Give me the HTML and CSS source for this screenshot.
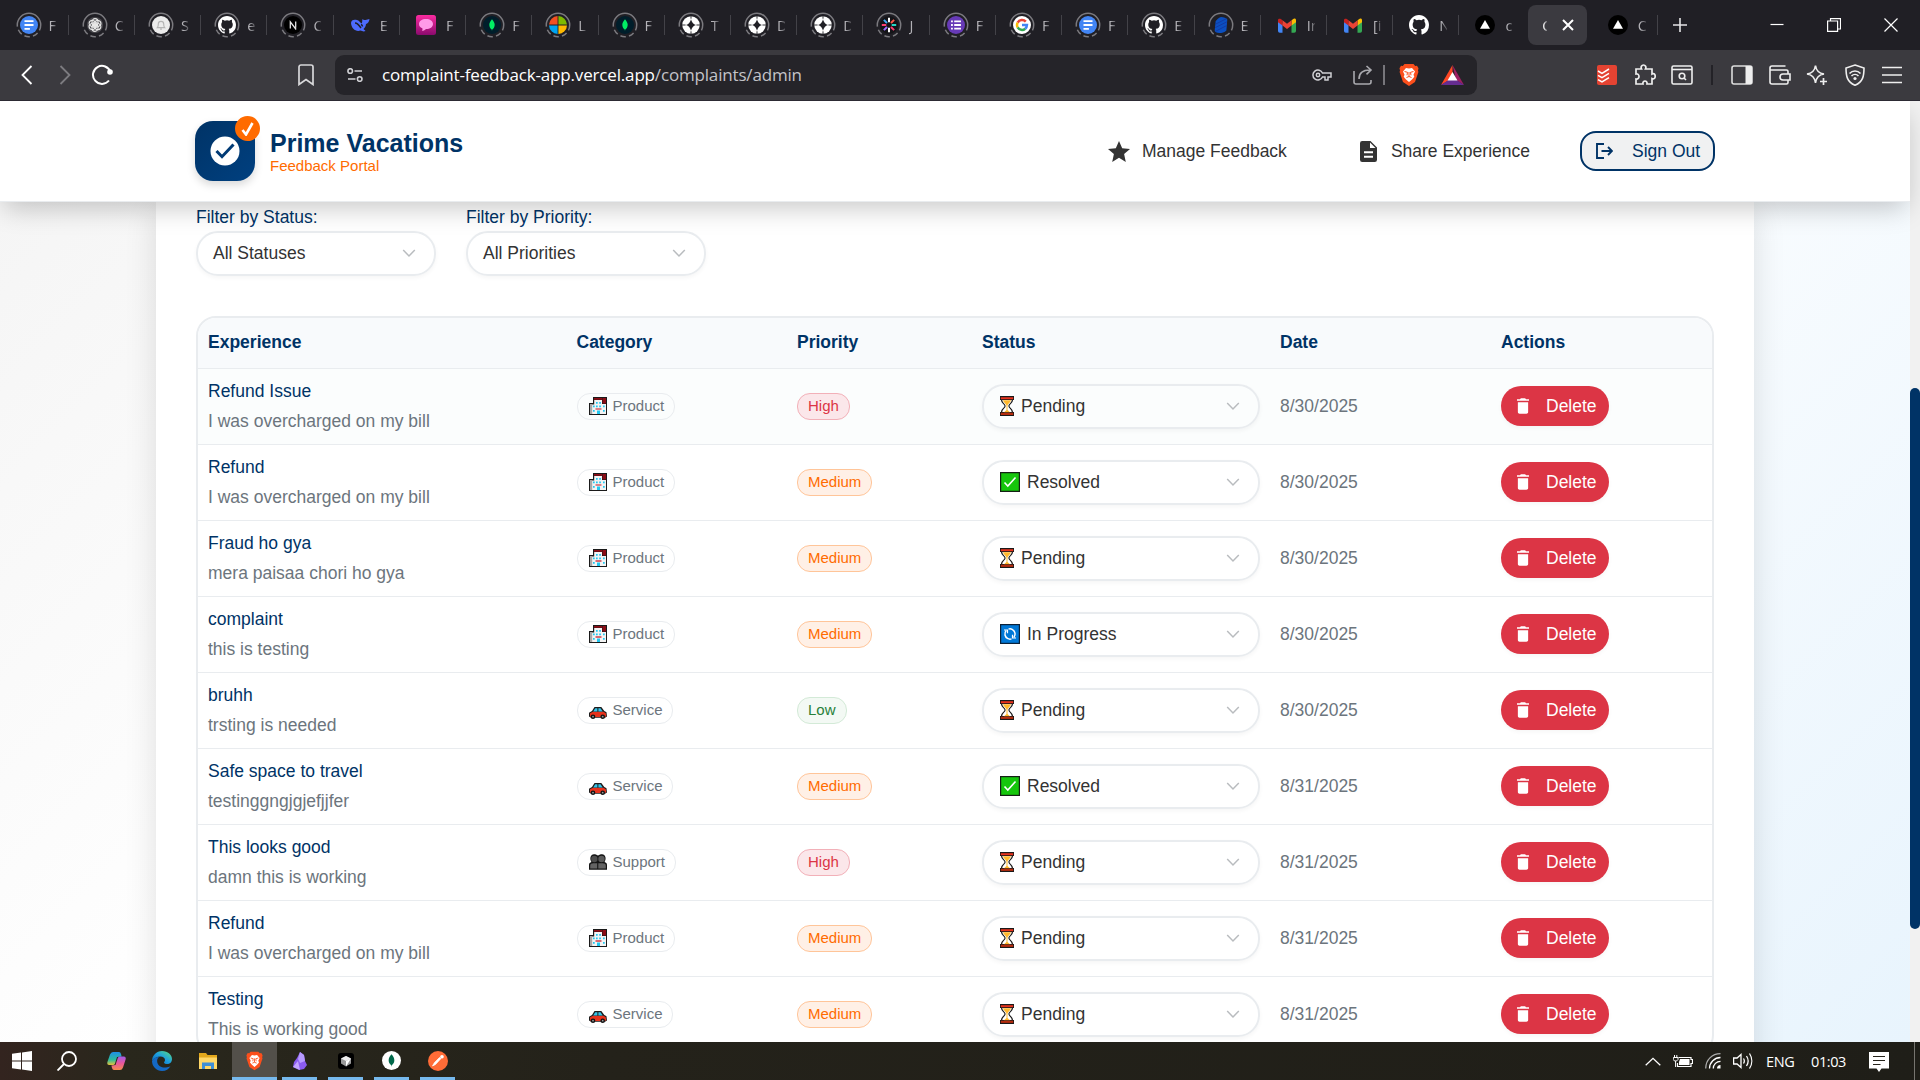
FILE: index.html
```html
<!DOCTYPE html>
<html lang="en">
<head>
<meta charset="utf-8">
<title>Complaints</title>
<link rel="stylesheet" href="styles.css">
</head>
<body>
<svg class="defs" width="0" height="0">
<defs>
<linearGradient id="g-edge" x1="0" y1="1" x2="1" y2="0"><stop offset="0" stop-color="#0c59a4"/><stop offset=".5" stop-color="#1b9de2"/><stop offset="1" stop-color="#5be07a"/></linearGradient>
<linearGradient id="g-cop1" x1="0" y1="0" x2="0" y2="1"><stop offset="0" stop-color="#1f8fe8"/><stop offset=".6" stop-color="#2dbd9b"/><stop offset="1" stop-color="#e8c13a"/></linearGradient>
<linearGradient id="g-cop2" x1="0" y1="0" x2="0" y2="1"><stop offset="0" stop-color="#a05ce8"/><stop offset=".5" stop-color="#e8569b"/><stop offset="1" stop-color="#f58a4e"/></linearGradient>
<linearGradient id="g-pink" x1="0" y1="0" x2="0" y2="1"><stop offset="0" stop-color="#fb2ba0"/><stop offset="1" stop-color="#8a0a6d"/></linearGradient>
<symbol id="ring" viewBox="0 0 26 26"><circle cx="13" cy="13" r="11.7" fill="none" stroke="#7b7a7f" stroke-width="1.5" stroke-dasharray="5.5 3.2 5.5 3.2 5.5 3.2 5.5 3.2 38.7 0"/></symbol>
<symbol id="i-docs" viewBox="0 0 20 20"><circle cx="10" cy="10" r="10" fill="#4285f4"/><path d="M5 5.8h10M5 10h10M5 14.2h6" stroke="#fff" stroke-width="2"/></symbol>
<symbol id="i-gpt" viewBox="0 0 20 20"><circle cx="10" cy="10" r="9" fill="#4a494e"/><g fill="none" stroke="#e8e8e8" stroke-width="1.3"><ellipse cx="10" cy="7" rx="3.4" ry="4"/><ellipse cx="10" cy="7" rx="3.4" ry="4" transform="rotate(60 10 10)"/><ellipse cx="10" cy="7" rx="3.4" ry="4" transform="rotate(120 10 10)"/><ellipse cx="10" cy="7" rx="3.4" ry="4" transform="rotate(180 10 10)"/><ellipse cx="10" cy="7" rx="3.4" ry="4" transform="rotate(240 10 10)"/><ellipse cx="10" cy="7" rx="3.4" ry="4" transform="rotate(300 10 10)"/></g></symbol>
<symbol id="i-bell" viewBox="0 0 20 20"><circle cx="10" cy="10" r="10" fill="#ececec"/><path d="M6 13c1-1 1-2 1-4a3 3 0 0 1 6 0c0 2 0 3 1 4zM9 14.5h2" fill="none" stroke="#b5b5b5" stroke-width="1.3"/></symbol>
<symbol id="i-github" viewBox="0 0 16 16"><path fill="#fff" d="M8 0C3.58 0 0 3.58 0 8c0 3.54 2.29 6.53 5.47 7.59.4.07.55-.17.55-.38 0-.19-.01-.82-.01-1.49-2.01.37-2.53-.49-2.69-.94-.09-.23-.48-.94-.82-1.13-.28-.15-.68-.52-.01-.53.63-.01 1.08.58 1.23.82.72 1.21 1.87.87 2.33.66.07-.52.28-.87.51-1.07-1.78-.2-3.64-.89-3.64-3.95 0-.87.31-1.59.82-2.15-.08-.2-.36-1.02.08-2.12 0 0 .67-.21 2.2.82a7.6 7.6 0 0 1 4 0c1.53-1.04 2.2-.82 2.2-.82.44 1.1.16 1.92.08 2.12.51.56.82 1.27.82 2.15 0 3.07-1.87 3.75-3.65 3.95.29.25.54.73.54 1.48 0 1.07-.01 1.93-.01 2.2 0 .21.15.46.55.38A8.01 8.01 0 0 0 16 8c0-4.42-3.58-8-8-8z"/></symbol>
<symbol id="i-next" viewBox="0 0 20 20"><circle cx="10" cy="10" r="10" fill="#000"/><path d="M7 14V6.5l6.5 8.500M13 6v7" fill="none" stroke="#e8e8e8" stroke-width="1.4"/></symbol>
<symbol id="i-whale" viewBox="0 0 20 20"><path fill="#4d6bfe" d="M1 8c0-3 3-4 6-3 2 .5 3 2 4.500 3.500 1-.8.5-2.500 1-4.500.8 1 1.500 1.300 3 1 1.500-.2 2.500-1 4-1-.3 3-2 4.500-3.500 5-.3 3-1.500 4-2.500 5 .5 1 1.500 1 2 2-2 1-3.500 0-5-.5C6 17 1.500 14 1 8z"/><path fill="none" stroke="#201f25" stroke-width="1.400" d="M5 8c2 0 4 2 6 5M11 9.500c1 .2 1.500 1 1.500 2"/></symbol>
<symbol id="i-pink" viewBox="0 0 20 20"><rect width="20" height="20" rx="2.500" fill="url(#g-pink)"/><path d="M10 4c4 0 7 2 7 5s-3 5-7 5c-1 1-3 2-4 2 .6-1 .6-2 .3-2.700C4 12.500 3 11 3 9c0-3 3-5 7-5z" fill="#ff9ae8"/></symbol>
<symbol id="i-mongo" viewBox="0 0 20 20"><circle cx="10" cy="10" r="10" fill="#001e2b"/><path d="M10 3.500c2 2.300 3 4.200 3 6.300 0 2.600-1.300 4.200-2.700 5.200l-.3 1.700-.3-1.700C8.300 14 7 12.400 7 9.800c0-2.100 1-4 3-6.300z" fill="#00ed64"/></symbol>
<symbol id="i-ms" viewBox="0 0 20 20"><path d="M9.500 9.500H0A10 10 0 0 1 9.500 0z" fill="#f25022"/><path d="M10.500 9.500H20A10 10 0 0 0 10.500 0z" fill="#7fba00"/><path d="M9.500 10.500H0A10 10 0 0 0 9.500 20z" fill="#00a4ef"/><path d="M10.500 10.500H20A10 10 0 0 1 10.500 20z" fill="#ffb900"/></symbol>
<symbol id="i-spark" viewBox="0 0 20 20"><circle cx="10" cy="10" r="9.700" fill="#fff"/><path d="M10 3.500q1.200 5.300 5.500 6.500-4.300 1.200-5.500 6.500-1.200-5.300-5.500-6.500 4.300-1.200 5.500-6.500z" fill="#201f25"/><path d="M10 0v3M10 17v3M0 10h4M16 10h4" stroke="#201f25" stroke-width="1"/></symbol>
<symbol id="i-burst" viewBox="0 0 20 20"><circle cx="10" cy="10" r="10" fill="#141418"/><g stroke-width="2.200"><path d="M10 2v5" stroke="#fff"/><path d="M10 13v5" stroke="#fff"/><path d="M2 10h5" stroke="#ff3d71"/><path d="M13 10h5" stroke="#24d6c4"/><path d="m4.300 4.300 3.500 3.500" stroke="#3fa9f5"/><path d="m12.200 12.200 3.500 3.500" stroke="#ff3d71"/><path d="m15.700 4.300-3.500 3.500" stroke="#ff5a4a"/><path d="m7.800 12.200-3.500 3.500" stroke="#9c6bff"/></g></symbol>
<symbol id="i-forms" viewBox="0 0 20 20"><circle cx="10" cy="10" r="10" fill="#673ab7"/><path d="M4.500 6h2M8 6h7.500M4.500 10h2M8 10h7.500M4.500 14h2M8 14h7.500" stroke="#fff" stroke-width="2"/></symbol>
<symbol id="i-google" viewBox="0 0 20 20"><circle cx="10" cy="10" r="10" fill="#fff"/><g fill="none" stroke-width="2.800"><path d="M14.200 6.300A5.500 5.500 0 0 0 5.200 7.300" stroke="#ea4335"/><path d="M5.200 7.300a5.500 5.500 0 0 0 0 5.400" stroke="#fbbc05"/><path d="M5.200 12.700a5.500 5.500 0 0 0 8.400 1.400" stroke="#34a853"/><path d="M13.600 14.100A5.500 5.500 0 0 0 15.500 10H10" stroke="#4285f4"/></g></symbol>
<symbol id="i-hex" viewBox="0 0 20 20"><path d="M10 1c3 0 6 1 7 3l-1 12c-2 2-5 3-8 3-3-.5-5-1-5-3L4 6c1-2 3-4 6-5z" fill="#0b4fc0"/><path d="m4 9 12-6M3.500 13l13-6.500M4 17l12.500-6.500" stroke="#1237a0" stroke-width="1"/></symbol>
<symbol id="i-gmail" viewBox="0 0 20 16"><path d="M0 3v11a2 2 0 0 0 2 2h3V6z" fill="#4285f4"/><path d="M20 3v11a2 2 0 0 1-2 2h-3V6z" fill="#34a853"/><path d="M15 2.500V8l5-3.700V2c0-2-2-2.500-3.500-1z" fill="#fbbc04"/><path d="M5 8V2.300L3.500 1C2 0 0 .5 0 2v2.300z" fill="#c5221f"/><path d="M5 8V2.300L10 6l5-3.700V8l-5 3.800z" fill="#ea4335"/></symbol>
<symbol id="i-vercel" viewBox="0 0 20 20"><circle cx="10" cy="10" r="10" fill="#000"/><path d="m10 5 5 8.700H5z" fill="#fff"/></symbol>
<symbol id="i-brave" viewBox="0 0 20 22"><path d="m14.500 0 1.700 2L18 1.700l1.500 2.600-.5 2.200.4 1.500-3.400 10L10 22l-6-4L.6 8 1 6.500.5 4.300 2 1.700 3.800 2l1.700-2z" fill="#fb4f1c"/><path d="M10 4.500 13 4l3 3.500-1.500 3.300.8 2-2.300 2.600L10 18l-3-2.600-2.300-2.600.8-2L4 7.500 7 4z" fill="#fff"/><path d="m5.500 7.500 3 .8-.5 3M14.500 7.500l-3 .8.5 3M7.500 13.500 10 12.500l2.500 1M10 8v4.500" stroke="#fb4f1c" stroke-width="1" fill="none"/></symbol>
<symbol id="i-building" viewBox="0 0 18 18"><path d="M4 0h14v18H0V6h4z" fill="#1a1a1a"/><path d="M5.200 3H13v4h4v10H1V7.500h4.200z" fill="#f3f3f3"/><path d="M5 1h8v1.800H5zM13.500 1H17v5.500h-3.500z" fill="#8b0d16"/><path d="M1 7h2.200v10H1z" fill="#a8a8a8"/><path d="M7 5h1.700v1.700H7zM10.200 5h1.700v1.700h-1.700zM4 8.500h1.700v1.700H4zM7 8.500h1.700v1.700H7zM10.200 8.500h1.700v1.700h-1.700zM14 8.500h1.700v1.700H14zM4 13h1.700v1.700H4zM14 13h1.700v1.700H14zM8 13.500h3V17H8z" fill="#22c8f0"/><path d="M6.500 11.400h6v1.200h-6z" fill="#c50f1f"/></symbol>
<symbol id="i-car" viewBox="0 0 18 12"><path d="M5.500 0h6.800l3 4 2.200 1.300.5 4.200-2 1.300h-14L0 9.500V5.800L3 4z" fill="#1c1c1c"/><path d="m1 6.200 3-1.400h10.500l2.300 1.400.4 2.800-1 1H1.500L1 8.600z" fill="#e8321c"/><path d="m6.200 1.200-2 3.300h4.200V1.200zM9.400 1.200v3.300h4.300l-2.200-3.300z" fill="#35c3e8"/><circle cx="4" cy="9.700" r="2.300" fill="#111"/><circle cx="13.700" cy="9.700" r="2.300" fill="#111"/><circle cx="4" cy="9.700" r=".9" fill="#999"/><circle cx="13.700" cy="9.700" r=".9" fill="#999"/></symbol>
<symbol id="i-people" viewBox="0 0 18 16"><path d="M0 15.800V11c0-1.800 1-2.500 2.500-3C.3 5 1.400.3 5 .3c1.800 0 3 .5 4 1.500C10 .8 11.200.3 13 .3c3.600 0 4.700 4.700 2.500 7.700 1.500.5 2.500 1.200 2.500 3v4.800z" fill="#151515"/><circle cx="5.300" cy="5" r="3.200" fill="#4c4c4c"/><circle cx="12.500" cy="5" r="3.200" fill="#5a5a5a"/><path d="M1.200 14.600V11.500c0-1.500 1.300-2.200 3-2.200h4v5.300zM9.300 14.600V9.300h4.500c1.700 0 3 .7 3 2.200v3.100z" fill="#636363"/></symbol>
<symbol id="i-hourglass" viewBox="0 0 14 20"><path d="M0 0h14v4h-1c0 3-3.500 4.500-3.500 6s3.500 3 3.500 6h1v4H0v-4h1c0-3 3.500-4.500 3.500-6S1 7 1 4H0z" fill="#1a1a1a"/><path d="M2.300 4h9.400c0 2.500-3.300 4-3.300 6s3.300 3.500 3.300 6H2.300c0-2.500 3.300-4 3.300-6S2.300 6.500 2.300 4z" fill="#fff"/><path d="M2.900 4.300h8.200C10.500 6.700 7.500 8 7.500 10v4l2.500 2.200H4L6.500 14v-4c0-2-3-3.300-3.600-5.700z" fill="#ffb92e"/><path d="M.8 1.200h12.400v2H.8z" fill="#e8321c"/><path d="M.8 16.700h12.400v2.200H.8z" fill="#b52c0e"/></symbol>
<symbol id="i-done" viewBox="0 0 20 20"><rect width="20" height="20" fill="#152015"/><path d="M1.200 1.200h17.600v17.600H1.200z" fill="#16c60c"/><path d="m4.500 10.500 3.300 3.500 7.700-8.500" fill="none" stroke="#fff" stroke-width="1.600"/></symbol>
<symbol id="i-sync" viewBox="0 0 20 20"><rect width="20" height="20" fill="#0b2138"/><path d="M1.200 1.200h17.600v17.600H1.200z" fill="#0078d7"/><g fill="none" stroke="#fff" stroke-width="1.500"><path d="M7.800 14.600A5.100 5.100 0 0 1 6.200 6.600M8.500 5.100a5.100 5.100 0 0 1 6.400 3.600M12.200 5.400a5.100 5.100 0 0 1 1.600 8M11.500 14.900A5.100 5.100 0 0 1 5.100 11.300"/><path d="M4 6h3.500v3.200M16 14h-3.500v-3.200" stroke-width="1.200"/></g></symbol>
<symbol id="i-chev" viewBox="0 0 14 10"><path d="m1.200 2 5.800 6 5.800-6" fill="none" stroke="#b9bcbf" stroke-width="1.500"/></symbol>
<symbol id="i-trash" viewBox="0 0 14 18"><path d="M1 16c0 1.100.9 2 2 2h8c1.100 0 2-.9 2-2V4.500H1zM14 1h-3.500l-1-1h-5l-1 1H0v2h14z" fill="#fff"/></symbol>
</defs>
</svg>
<div class="tabs">
<div class="tab"><span class="fav ringed"><svg class="ring"><use href="#ring"/></svg><svg class="ico"><use href="#i-docs"/></svg></span><span class="lbl">F</span></div>
<div class="tab"><span class="fav ringed"><svg class="ring"><use href="#ring"/></svg><svg class="ico"><use href="#i-gpt"/></svg></span><span class="lbl">C</span></div>
<div class="tab"><span class="fav ringed"><svg class="ring"><use href="#ring"/></svg><svg class="ico"><use href="#i-bell"/></svg></span><span class="lbl">S</span></div>
<div class="tab"><span class="fav ringed"><svg class="ring"><use href="#ring"/></svg><svg class="ico"><use href="#i-github"/></svg></span><span class="lbl">e</span></div>
<div class="tab"><span class="fav ringed"><svg class="ring"><use href="#ring"/></svg><svg class="ico"><use href="#i-next"/></svg></span><span class="lbl">C</span></div>
<div class="tab"><span class="fav"><svg class="ico big"><use href="#i-whale"/></svg></span><span class="lbl">E</span></div>
<div class="tab"><span class="fav"><svg class="ico big"><use href="#i-pink"/></svg></span><span class="lbl">F</span></div>
<div class="tab"><span class="fav ringed"><svg class="ring"><use href="#ring"/></svg><svg class="ico"><use href="#i-mongo"/></svg></span><span class="lbl">F</span></div>
<div class="tab"><span class="fav ringed"><svg class="ring"><use href="#ring"/></svg><svg class="ico"><use href="#i-ms"/></svg></span><span class="lbl">L</span></div>
<div class="tab"><span class="fav ringed"><svg class="ring"><use href="#ring"/></svg><svg class="ico"><use href="#i-mongo"/></svg></span><span class="lbl">F</span></div>
<div class="tab"><span class="fav ringed"><svg class="ring"><use href="#ring"/></svg><svg class="ico"><use href="#i-spark"/></svg></span><span class="lbl">T</span></div>
<div class="tab"><span class="fav ringed"><svg class="ring"><use href="#ring"/></svg><svg class="ico"><use href="#i-spark"/></svg></span><span class="lbl">D</span></div>
<div class="tab"><span class="fav ringed"><svg class="ring"><use href="#ring"/></svg><svg class="ico"><use href="#i-spark"/></svg></span><span class="lbl">D</span></div>
<div class="tab"><span class="fav ringed"><svg class="ring"><use href="#ring"/></svg><svg class="ico"><use href="#i-burst"/></svg></span><span class="lbl">J</span></div>
<div class="tab"><span class="fav ringed"><svg class="ring"><use href="#ring"/></svg><svg class="ico"><use href="#i-forms"/></svg></span><span class="lbl">F</span></div>
<div class="tab"><span class="fav ringed"><svg class="ring"><use href="#ring"/></svg><svg class="ico"><use href="#i-google"/></svg></span><span class="lbl">F</span></div>
<div class="tab"><span class="fav ringed"><svg class="ring"><use href="#ring"/></svg><svg class="ico"><use href="#i-docs"/></svg></span><span class="lbl">F</span></div>
<div class="tab"><span class="fav ringed"><svg class="ring"><use href="#ring"/></svg><svg class="ico"><use href="#i-github"/></svg></span><span class="lbl">E</span></div>
<div class="tab"><span class="fav ringed"><svg class="ring"><use href="#ring"/></svg><svg class="ico"><use href="#i-hex"/></svg></span><span class="lbl">E</span></div>
<div class="tab"><span class="fav"><svg class="ico mail"><use href="#i-gmail"/></svg></span><span class="lbl">In</span></div>
<div class="tab"><span class="fav"><svg class="ico mail"><use href="#i-gmail"/></svg></span><span class="lbl">[i</span></div>
<div class="tab"><span class="fav"><svg class="ico big"><use href="#i-github"/></svg></span><span class="lbl">N</span></div>
<div class="tab nosep"><span class="fav"><svg class="ico big"><use href="#i-vercel"/></svg></span><span class="lbl">c</span></div>
<div class="tab active"><span class="lbl">C</span><svg class="x" viewBox="0 0 12 12"><path d="m1 1 10 10M11 1 1 11" stroke="#fff" stroke-width="2"/></svg></div>
<div class="tab"><span class="fav"><svg class="ico big"><use href="#i-vercel"/></svg></span><span class="lbl">C</span></div>
<svg class="plus" viewBox="0 0 14 14"><path d="M7 0v14M0 7h14" stroke="#e4e4e6" stroke-width="1.600"/></svg>
<div class="winctl">
<svg viewBox="0 0 14 14"><path d="M.5 6.500h13" stroke="#fff" stroke-width="1.200"/></svg>
<svg viewBox="0 0 14 14"><path d="M.6 3h10v10.400H.6zM3.500 3V.6h10V11h-2.900" fill="none" stroke="#fff" stroke-width="1.200"/></svg>
<svg viewBox="0 0 14 14"><path d="m.5.5 13 13M13.500.5l-13 13" stroke="#fff" stroke-width="1.200"/></svg>
</div>
</div>
<div class="toolbar">
<div class="slot"><svg width="12" height="20" viewBox="0 0 12 20"><path d="m10.500 1-9 9 9 9" fill="none" stroke="#fff" stroke-width="1.800"/></svg></div>
<div class="slot"><svg width="12" height="20" viewBox="0 0 12 20"><path d="m1.500 1 9 9-9 9" fill="none" stroke="#7d7c81" stroke-width="1.800"/></svg></div>
<div class="slot"><svg width="22" height="22" viewBox="0 0 22 22"><path d="M18 16.500A9 9 0 1 1 19.500 8" fill="none" stroke="#fff" stroke-width="2"/><circle cx="19" cy="8" r="2.800" fill="#fff"/></svg></div>
<div class="slot mark"><svg width="16" height="22" viewBox="0 0 16 22"><path d="M1 3a2 2 0 0 1 2-2h10a2 2 0 0 1 2 2v17.500l-7-5-7 5z" fill="none" stroke="#d8d8da" stroke-width="1.700"/></svg></div>
<div class="address">
<svg width="16" height="14" viewBox="0 0 16 14"><g fill="none" stroke="#d0d0d4" stroke-width="1.600"><circle cx="3.200" cy="3" r="2.300"/><path d="M7.500 3H15M1 11h7.500"/><circle cx="12.700" cy="11" r="2.300"/></g></svg>
<span class="url">complaint-feedback-app.vercel.app<span class="path">/complaints/admin</span></span>
<div class="slot key"><svg width="20" height="12" viewBox="0 0 20 12"><g fill="none" stroke="#cfcfd3" stroke-width="1.500"><path d="M10.500 4A5 5 0 1 0 10.500 8H13v3h3V8h3V4z"/><circle cx="6" cy="6" r="1.700"/></g></svg></div>
<div class="slot share"><svg width="20" height="20" viewBox="0 0 20 20"><path d="M1 6v11a2 2 0 0 0 2 2h13a2 2 0 0 0 2-2v-2M6 14c0-5 3-9 11-9M13.500 1l4.500 4-4.500 4.300" fill="none" stroke="#a9a9ae" stroke-width="1.600"/></svg></div>
<i class="vsep"></i>
<div class="slot bravei"><svg width="20" height="22"><use href="#i-brave"/></svg></div>
<div class="slot bat"><svg width="23" height="20" viewBox="0 0 23 20"><path d="M11.500 0 0 20l11.500-7z" fill="#ff4724"/><path d="M11.500 0 23 20l-8-5z" fill="#9e1f63"/><path d="M0 20h23l-7.500-5h-8z" fill="#662d91"/><path d="m11.500 7 5 8.500h-10z" fill="#fff"/></svg></div>
</div>
<div class="exts">
<div class="slot"><svg width="20" height="20" viewBox="0 0 20 20"><rect width="20" height="20" rx="2" fill="#e44332"/><path d="m1 6 4 2.300L12 4M1 10.300l4 2.300 7-4.300M1 14.600l4 2.300 7-4.300" fill="none" stroke="#fff" stroke-width="1.500"/></svg></div>
<div class="slot"><svg width="22" height="22" viewBox="0 0 22 22"><path d="M2 5h5.500c-1-2 .2-4 2-4s3 2 2 4H18v5c2-1 3.200.2 3.200 2.200S20 15.400 18 14.500V20h-5c.3-2-.8-3-2-3s-2.500 1-2 3H2v-5c2 .3 3-1 3-2.500S4 9.500 2 10z" fill="none" stroke="#eee" stroke-width="1.700"/></svg></div>
<div class="slot"><svg width="22" height="20" viewBox="0 0 22 20"><g fill="none" stroke="#eee" stroke-width="1.600"><rect x="1" y="1" width="20" height="18" rx="1.500"/><path d="M1 4.500h20"/><circle cx="11" cy="11" r="2.800"/><path d="m13 13 2 2"/></g></svg></div>
<i class="vsep dark"></i>
<div class="slot"><svg width="22" height="20" viewBox="0 0 22 20"><rect x="1" y="1" width="20" height="18" rx="2" fill="none" stroke="#ddd" stroke-width="1.600"/><path d="M14.500 1H20l1 1v16l-1 1h-5.500z" fill="#eee"/></svg></div>
<div class="slot"><svg width="22" height="20" viewBox="0 0 22 20"><g fill="none" stroke="#eee" stroke-width="1.600"><path d="M1 5V17a2 2 0 0 0 2 2h14.500a1.500 1.500 0 0 0 1.500-1.500V15M19 9V6.500A1.500 1.500 0 0 0 17.500 5H1V3a2 2 0 0 1 2-2h13.500"/><path d="M21 9h-7a3 3 0 0 0 0 6h7z"/></g></svg></div>
<div class="slot"><svg width="22" height="22" viewBox="0 0 22 22"><path d="M9.500 1.500q1 7.500 8.500 8.500-7.500 1-8.500 9-1-8-8.500-9 7.500-1 8.500-8.500z" fill="none" stroke="#eee" stroke-width="1.600"/><path d="M17.500 14v7M14 17.500h7" stroke="#eee" stroke-width="1.700"/></svg></div>
<div class="slot"><svg width="20" height="22" viewBox="0 0 20 22"><path d="m10 1 9 3c0 8-1 14-9 17.300C2 18 1 12 1 4z" fill="none" stroke="#eee" stroke-width="1.600"/><path d="M4.500 9.500c3-3.300 8-3.300 11 0M6.500 12c2-2 5-2 7 0" fill="none" stroke="#eee" stroke-width="1.600"/><circle cx="10" cy="14.500" r="1.600" fill="#eee"/></svg></div>
<div class="slot"><svg width="20" height="18" viewBox="0 0 20 18"><path d="M0 1.500h20M0 9h20M0 16.500h20" stroke="#eee" stroke-width="1.700"/></svg></div>
</div>
</div>
<div class="view">
<div class="page">
<header class="site">
<div class="logo">
<div class="mark"><svg width="30" height="30" viewBox="0 0 30 30"><circle cx="15" cy="15" r="14.500" fill="#fff"/><path d="m6.500 15 5.500 5.700L23.500 8.500" fill="none" stroke="#003a75" stroke-width="3"/></svg>
<span class="tick"><svg width="13" height="14" viewBox="0 0 13 14"><path d="m1.500 8 3.500 4.500L11.500 1" fill="none" stroke="#fff" stroke-width="2.600"/></svg></span></div>
<div class="names"><div class="brand">Prime Vacations</div><div class="sub">Feedback Portal</div></div>
</div>
<nav>
<a class="n1"><svg width="22" height="21" viewBox="0 0 22 21"><path d="m11 0 3.200 7.200 7.800.7-5.900 5.200L17.800 21 11 16.800 4.200 21l1.700-7.900L0 7.900l7.800-.7z" fill="#333"/></svg>Manage Feedback</a>
<a class="n2"><svg width="17" height="21" viewBox="0 0 17 21"><path d="M2.200 0H10.500L17 6.500v12.300a2.200 2.200 0 0 1-2.200 2.200H2.200A2.200 2.200 0 0 1 0 18.800V2.200A2.200 2.200 0 0 1 2.200 0z" fill="#333"/><path d="M10 1.500V7h5.500z" fill="#fff"/><path d="M4 11.300h9M4 15.700h9" stroke="#fff" stroke-width="1.900"/></svg>Share Experience</a>
<button class="out"><svg width="17" height="16" viewBox="0 0 17 16"><path d="M8 1H1v14h7M5.500 8H16M12 4l4 4-4 4" fill="none" stroke="#003366" stroke-width="1.900"/></svg>Sign Out</button>
</nav>
</header>
<main class="card">
<div class="filters">
<div class="filter"><label>Filter by Status:</label><div class="select">All Statuses<svg class="chev"><use href="#i-chev"/></svg></div></div>
<div class="filter"><label>Filter by Priority:</label><div class="select">All Priorities<svg class="chev"><use href="#i-chev"/></svg></div></div>
</div>
<div class="table">
<div class="row head"><div>Experience</div><div>Category</div><div>Priority</div><div>Status</div><div>Date</div><div>Actions</div></div>
<div class="row hover"><div class="exp"><b>Refund Issue</b><span>I was overcharged on my bill</span></div><div><span class="cat"><svg class="bld"><use href="#i-building"/></svg>Product</span></div><div><span class="pri high">High</span></div><div><div class="select"><svg class="hg"><use href="#i-hourglass"/></svg>Pending<svg class="chev"><use href="#i-chev"/></svg></div></div><div class="date">8/30/2025</div><div><button class="del"><svg><use href="#i-trash"/></svg>Delete</button></div></div>
<div class="row"><div class="exp"><b>Refund</b><span>I was overcharged on my bill</span></div><div><span class="cat"><svg class="bld"><use href="#i-building"/></svg>Product</span></div><div><span class="pri med">Medium</span></div><div><div class="select"><svg class="sq"><use href="#i-done"/></svg>Resolved<svg class="chev"><use href="#i-chev"/></svg></div></div><div class="date">8/30/2025</div><div><button class="del"><svg><use href="#i-trash"/></svg>Delete</button></div></div>
<div class="row"><div class="exp"><b>Fraud ho gya</b><span>mera paisaa chori ho gya</span></div><div><span class="cat"><svg class="bld"><use href="#i-building"/></svg>Product</span></div><div><span class="pri med">Medium</span></div><div><div class="select"><svg class="hg"><use href="#i-hourglass"/></svg>Pending<svg class="chev"><use href="#i-chev"/></svg></div></div><div class="date">8/30/2025</div><div><button class="del"><svg><use href="#i-trash"/></svg>Delete</button></div></div>
<div class="row"><div class="exp"><b>complaint</b><span>this is testing</span></div><div><span class="cat"><svg class="bld"><use href="#i-building"/></svg>Product</span></div><div><span class="pri med">Medium</span></div><div><div class="select"><svg class="sq"><use href="#i-sync"/></svg>In Progress<svg class="chev"><use href="#i-chev"/></svg></div></div><div class="date">8/30/2025</div><div><button class="del"><svg><use href="#i-trash"/></svg>Delete</button></div></div>
<div class="row"><div class="exp"><b>bruhh</b><span>trsting is needed</span></div><div><span class="cat"><svg class="car"><use href="#i-car"/></svg>Service</span></div><div><span class="pri low">Low</span></div><div><div class="select"><svg class="hg"><use href="#i-hourglass"/></svg>Pending<svg class="chev"><use href="#i-chev"/></svg></div></div><div class="date">8/30/2025</div><div><button class="del"><svg><use href="#i-trash"/></svg>Delete</button></div></div>
<div class="row"><div class="exp"><b>Safe space to travel</b><span>testinggngjgjefjjfer</span></div><div><span class="cat"><svg class="car"><use href="#i-car"/></svg>Service</span></div><div><span class="pri med">Medium</span></div><div><div class="select"><svg class="sq"><use href="#i-done"/></svg>Resolved<svg class="chev"><use href="#i-chev"/></svg></div></div><div class="date">8/31/2025</div><div><button class="del"><svg><use href="#i-trash"/></svg>Delete</button></div></div>
<div class="row"><div class="exp"><b>This looks good</b><span>damn this is working</span></div><div><span class="cat"><svg class="ppl"><use href="#i-people"/></svg>Support</span></div><div><span class="pri high">High</span></div><div><div class="select"><svg class="hg"><use href="#i-hourglass"/></svg>Pending<svg class="chev"><use href="#i-chev"/></svg></div></div><div class="date">8/31/2025</div><div><button class="del"><svg><use href="#i-trash"/></svg>Delete</button></div></div>
<div class="row"><div class="exp"><b>Refund</b><span>I was overcharged on my bill</span></div><div><span class="cat"><svg class="bld"><use href="#i-building"/></svg>Product</span></div><div><span class="pri med">Medium</span></div><div><div class="select"><svg class="hg"><use href="#i-hourglass"/></svg>Pending<svg class="chev"><use href="#i-chev"/></svg></div></div><div class="date">8/31/2025</div><div><button class="del"><svg><use href="#i-trash"/></svg>Delete</button></div></div>
<div class="row"><div class="exp"><b>Testing</b><span>This is working good</span></div><div><span class="cat"><svg class="car"><use href="#i-car"/></svg>Service</span></div><div><span class="pri med">Medium</span></div><div><div class="select"><svg class="hg"><use href="#i-hourglass"/></svg>Pending<svg class="chev"><use href="#i-chev"/></svg></div></div><div class="date">8/31/2025</div><div><button class="del"><svg><use href="#i-trash"/></svg>Delete</button></div></div>
</div>
</main>
</div>
<div class="scroll"><div class="thumb"></div></div>
</div>
<div class="taskbar">
<div class="app"><svg width="20" height="20" viewBox="0 0 20 20"><path d="M0 2.800 9 1.500v8H0zM10 1.400 20 0v9.500H10zM0 10.500h9v8l-9-1.300zM10 10.500h10V20l-10-1.400z" fill="#fff"/></svg></div>
<div class="app"><svg width="20" height="20" viewBox="0 0 20 20"><circle cx="12" cy="8" r="7" fill="none" stroke="#fff" stroke-width="1.800"/><path d="m7 13-6.500 6.500" stroke="#fff" stroke-width="1.900"/></svg></div>
<div class="app"><svg width="19" height="18" viewBox="0 0 19 18"><path d="M6 0h6q1.500 0 2 2l.6 2.500L10 5 8 11.500Q7.500 13 6 13H2Q-.3 13 .4 10L3 2.500Q4 0 6 0z" fill="url(#g-cop1)"/><path d="M13 18H7q-1.500 0-2-2l-.6-2.500L8.500 13l2.300-7q.5-1.500 2-1.500H17q2.300 0 1.600 3L16 15.500Q15 18 13 18z" fill="url(#g-cop2)"/></svg></div>
<div class="app"><svg width="20" height="20" viewBox="0 0 20 20"><path d="M10 0c6 0 10 4 10 8 0 3-2 5-5 5-2 0-3-.6-3-1.500S13 10.500 13 9c0-2-2-3.500-4.500-3.500C5 5.500 2 7.500 0 10 0 4.500 4.500 0 10 0z" fill="url(#g-edge)"/><path d="M0 10c1.500-2.500 4-4 7-4-1.500 1-2.200 3-1.700 5.500C6 15 10 17 14 16.500c1.500-.1 3-.5 4.500-1.500C17 18 14 20 10 20 4.500 20 0 15.500 0 10z" fill="#1469c5"/></svg></div>
<div class="app"><svg width="18" height="16" viewBox="0 0 18 16"><path d="M0 0h7l1.500 2H18v14H0z" fill="#e3a81c"/><path d="M0 4.500h18V16H0z" fill="#ffd767"/><path d="M3 16V9.500h12V16h-3v-3H6v3z" fill="#3f8fd6"/></svg></div>
<div class="app on cur"><svg width="17" height="20"><use href="#i-brave"/></svg></div>
<div class="app on"><svg width="14" height="18" viewBox="0 0 14 18"><path d="m7 0 4 3 1 6 2 4-3 4-5 1-6-3 1-5 3-4z" fill="#8b5cf0"/><path d="m7 0-2 7 2 4 5-2-1-6z" fill="#b79bff"/><path d="m0 15 5-6 2 9z" fill="#c3a4ff"/></svg></div>
<div class="app on"><svg width="16" height="16" viewBox="0 0 16 16"><rect width="16" height="16" rx="3" fill="#000"/><path d="m8 3 5 2.500v5L8 13.500l-5-3v-5z" fill="#999"/><path d="m3 5.500 5-2.500 5 2.500L8 8z" fill="#eee"/><path d="m13 5.500-5 8V8z" fill="#fff"/></svg></div>
<div class="app on"><svg width="19" height="19" viewBox="0 0 20 20"><circle cx="10" cy="10" r="10" fill="#fff"/><path d="M10 3.500c2 2.300 3 4.200 3 6.300 0 2.600-1.300 4.200-2.700 5.200l-.3 1.700-.3-1.700C8.300 14 7 12.400 7 9.800c0-2.100 1-4 3-6.300z" fill="#00684a"/></svg></div>
<div class="app on"><svg width="20" height="20" viewBox="0 0 20 20"><circle cx="10" cy="10" r="10" fill="#ff6c37"/><circle cx="14" cy="5.700" r="1.800" fill="#fff"/><path d="m12.500 7-6 6M4.500 15l3-1.500 5.500-6-1.500-1-5 5z" fill="#fff" stroke="#fff" stroke-width=".7"/></svg></div>
<div class="tray">
<div class="ti"><svg width="16" height="9" viewBox="0 0 16 9"><path d="m.7 8.300 7.300-7 7.300 7" fill="none" stroke="#fff" stroke-width="1.300"/></svg></div>
<div class="ti"><svg width="20" height="13" viewBox="0 0 20 13"><path d="M5.500 2.500H18v2h1.500v4H18v3H4.500V8" fill="none" stroke="#fff" stroke-width="1.200"/><path d="M7 4h9.500v6H6V7z" fill="#fff"/><path d="M1.500 0v2.500M3.800 0v2.500M.3 2.500H5v2L3.500 6h-2L.3 4.500zM2.600 6v6" stroke="#fff" fill="none"/></svg></div>
<div class="ti"><svg width="16" height="16" viewBox="0 0 16 16"><g fill="none" stroke="#fff" stroke-width="1.300"><path d="M.7 15.500C.7 7 7 .7 15.500.7" stroke="#aaa"/><path d="M4.500 15.500c0-6 5-11 11-11M8.300 15.500c0-4 3.200-7.200 7.200-7.200"/></g><path d="M12 15.500a3.500 3.500 0 0 1 3.500-3.500v3.500z" fill="#fff"/></svg></div>
<div class="ti"><svg width="20" height="18" viewBox="0 0 20 18"><g fill="none" stroke="#fff" stroke-width="1.300"><path d="M.6 6h3.500L8 2.500v13L4.100 12H.6zM10.500 6.500c1 1.500 1 3.500 0 5M13.500 4c2 3 2 7 0 10M16.500 1.500c3 4.500 3 10.500 0 15"/></g></svg></div>
<span class="lang">ENG</span><span class="clock">01:03</span>
<svg class="note" width="20" height="20" viewBox="0 0 20 20"><path d="M0 0h20v16.500h-7.500L10 20l-2.500-3.500H0z" fill="#fff"/><path d="M4 4.500h12M4 8.500h12M4 12.500h7.500" stroke="#26231b" stroke-width="1.200"/></svg>
<i class="peek"></i>
</div>
</div>
</body>
</html>
```
FILE: styles.css
```css
* { box-sizing: border-box; }
body { margin: 0; width: 1920px; height: 1080px; overflow: hidden; display: flex; flex-direction: column; font-family: "Liberation Sans", Arial, sans-serif; font-size: 17.5px; }
svg { flex: none; display: block; }
.defs { position: absolute; }

/* browser tab strip */
.tabs { height: 50px; background: #201f25; display: flex; align-items: center; padding-left: 2.600px; flex: none; }
.tab { width: 66.220px; height: 20px; padding-left: 13px; display: flex; align-items: center; border-right: 1px solid #434248; flex: none; }
.tab.nosep { border-color: transparent; }
.fav { width: 26px; height: 26px; display: grid; place-items: center; flex: none; }
.fav svg { grid-area: 1 / 1; }
.ring { width: 26px; height: 26px; }
.ico { width: 18px; height: 18px; }
.ico.big { width: 20px; height: 20px; }
.ico.mail { width: 18px; height: 15px; }
.lbl { width: 8px; margin-left: 7px; overflow: hidden; font: 14.500px "Open Sans", sans-serif; color: #b4b3b8; white-space: nowrap; -webkit-mask-image: linear-gradient(90deg, #000 30%, rgba(0, 0, 0, .3)); mask-image: linear-gradient(90deg, #000 30%, rgba(0, 0, 0, .3)); }
.tab.active { height: 40px; width: 59px; margin: 0 4.500px 0 2.500px; padding-left: 14px; border: 0; border-radius: 8px; background: #3b3a40; }
.tab.active .lbl { width: 5px; margin: 0 15px 0 0; color: #fff; }
.x { width: 12px; height: 12px; }
.plus { width: 14px; height: 14px; margin-left: 15px; }
.winctl { margin-left: auto; display: flex; gap: 43px; padding-right: 22px; }
.winctl svg { width: 14px; height: 14px; }

/* browser toolbar */
.toolbar { height: 51px; background: #3b3a3f; border-bottom: 1px solid #2c2a33; display: flex; align-items: center; padding-left: 8.500px; flex: none; }
.slot { width: 37.600px; display: flex; justify-content: center; align-items: center; flex: none; }
.slot.mark { margin-left: 166px; }
.address { width: 1142px; height: 40px; margin-left: 10.100px; border-radius: 9px; background: #252429; display: flex; align-items: center; padding-left: 12px; flex: none; }
.url { font: 17px "Open Sans", sans-serif; letter-spacing: -.17px; color: #fff; margin: 0 0 2px 19px; flex: 1; }
.path { color: #c3c3c8; }
.vsep { width: 1.500px; height: 20px; background: #77767b; }
.key { width: 42px; }
.share { width: 40px; }
.bravei { width: 49px; }
.bat { width: 38px; margin-right: 5px; }
.exts { margin-left: 111.500px; display: flex; align-items: center; }
.vsep.dark { background: #232227; width: 2px; margin: 0 10px; }

/* page viewport */
.view { height: 941px; display: flex; flex: none; overflow: hidden; }
.page { width: 1910px; background: linear-gradient(135deg, #f4f4f4 0%, #ffffff 38%, #ffffff 50%, #e8f4fd 100%); display: flex; flex-direction: column; align-items: center; }
.site { height: 101px; width: 1910px; flex: none; background: #fff; border-bottom: 1px solid #e9ecef; box-shadow: 0 10px 25px -4px rgba(0, 0, 0, .22); z-index: 1; display: flex; align-items: center; justify-content: space-between; padding: 0 195px; }
.logo { display: flex; align-items: center; gap: 15px; }
.logo .mark { width: 60px; height: 60px; border-radius: 18px; background: linear-gradient(135deg, #003366, #004080); box-shadow: 0 4px 8px rgba(0, 0, 0, .15); display: grid; place-items: center; position: relative; }
.tick { position: absolute; right: -5px; top: -5px; width: 25px; height: 25px; border-radius: 50%; background: #ff6b00; display: grid; place-items: center; }
.names { padding-top: 3px; }
.brand { font-size: 25px; font-weight: 700; line-height: 26px; color: #003366; }
.sub { font-size: 15px; line-height: 19px; color: #ff6b00; }
nav { display: flex; align-items: center; font-size: 17.500px; color: #333; }
nav a { display: flex; align-items: center; gap: 12px; }
.n1 { margin-right: 73px; }
.n2 { margin-right: 50px; }
.n2 svg { margin-right: 2px; }
.out { width: 135px; height: 40px; border: 2px solid #003366; border-radius: 16px; background: #f0f1f2; color: #003366; font: 17.500px "Liberation Sans", Arial, sans-serif; padding: 0 0 0 14px; display: flex; align-items: center; gap: 19px; white-space: nowrap; }

.card { width: 1598px; height: 900px; flex: none; background: #fff; box-shadow: 0 8px 30px rgba(0, 0, 0, .12); padding: 3px 40px 0; }
.filters { display: flex; gap: 30px; margin-bottom: 40px; }
.filter { width: 240px; }
.filter label { display: block; height: 26px; line-height: 25px; color: #003366; }
.select { height: 45px; border: 2px solid #e9ecef; border-radius: 22px; display: flex; align-items: center; padding: 0 18px 1px 15px; color: #333; box-shadow: 0 2px 4px rgba(0, 0, 0, .04); width: 100%; }
.chev { width: 14px; height: 10px; margin-left: auto; }

.table { border: 2px solid #e9ecef; border-radius: 20px; overflow: hidden; }
.row { display: grid; grid-template-columns: 368.500px 220.500px 185px 298px 221px 221px; height: 76px; border-bottom: 1px solid #e9ecef; align-items: center; color: #6c757d; }
.row > div { padding: 0 10px; min-width: 0; }
.row.head { height: 51px; padding-bottom: 2px; background: #f8fafc; color: #003366; font-weight: 700; }
.row.hover { background: #fbfdfd; }
.exp b, .exp span { display: block; font-weight: 400; line-height: 30px; }
.row > .exp { margin-top: -1px; }
.exp b { color: #003366; }
.cat, .pri { display: inline-flex; align-items: center; height: 27px; border: 1px solid #e9ecef; border-radius: 13px; font-size: 15px; padding: 0 10px 1px; vertical-align: middle; margin-bottom: 1px; }
.cat { padding-left: 11px; padding-right: 9.500px; }
.bld { width: 18px; height: 18px; margin-right: 6px; }
.car { width: 18px; height: 12px; margin: 6px 6px 0 0; }
.ppl { width: 18px; height: 16px; margin-right: 6px; }
.high { color: #dc3545; background: #fbe7ea; border-color: #f2b0b8; }
.med { color: #ff6b00; background: #fff0e6; border-color: #ffc599; }
.low { color: #28803a; background: #f3f9f4; border-color: #d3ead7; }
.row .select { width: 278px; padding: 0 18px 1px 16px; }
.hg { width: 14px; height: 20px; margin-right: 7px; }
.sq { width: 20px; height: 20px; margin-right: 7px; }
.del { width: 108px; height: 40px; border: 0; border-radius: 20px; background: #dc3545; color: #fff; font: 17.500px "Liberation Sans", Arial, sans-serif; display: flex; align-items: center; margin: -1px 0 0; padding: 0 0 0 16px; gap: 17px; box-shadow: 0 2px 4px rgba(0, 0, 0, .04); }
.del svg { width: 12px; height: 16px; }

.scroll { width: 10px; height: 941px; background: #f1f1f1; padding-top: 287px; }
.thumb { height: 541px; border-radius: 5px; background: #003366; }

/* desktop taskbar */
.taskbar { height: 38px; background: linear-gradient(90deg, #33241f 0, #29271c 120px, #24221a 600px, #1f1e18 1920px); display: flex; flex: none; }
.app { width: 46px; height: 38px; display: grid; place-items: center; border-bottom: 0 solid #76b9ed; }
.app:first-child { width: 44px; }
.app:nth-child(3) { margin-left: 3px; }
.app.on { width: 35px; margin: 0 5.500px; border-bottom-width: 3px; padding-top: 2px; }
.app.on.cur { width: 45px; margin: 0 0 0 .500px; background: #53504a; }
.tray { margin-left: auto; display: flex; align-items: center; color: #fff; }
.ti { width: 30px; display: grid; place-items: center; }
.lang, .clock { font: 14.500px "Open Sans", sans-serif; letter-spacing: -.4px; }
.lang { margin-left: 8px; width: 45px; }
.clock { width: 58px; }
.note { margin-top: 1px; }
.peek { width: 1px; height: 38px; background: #77756f; margin: 0 5px 0 25px; }
```
